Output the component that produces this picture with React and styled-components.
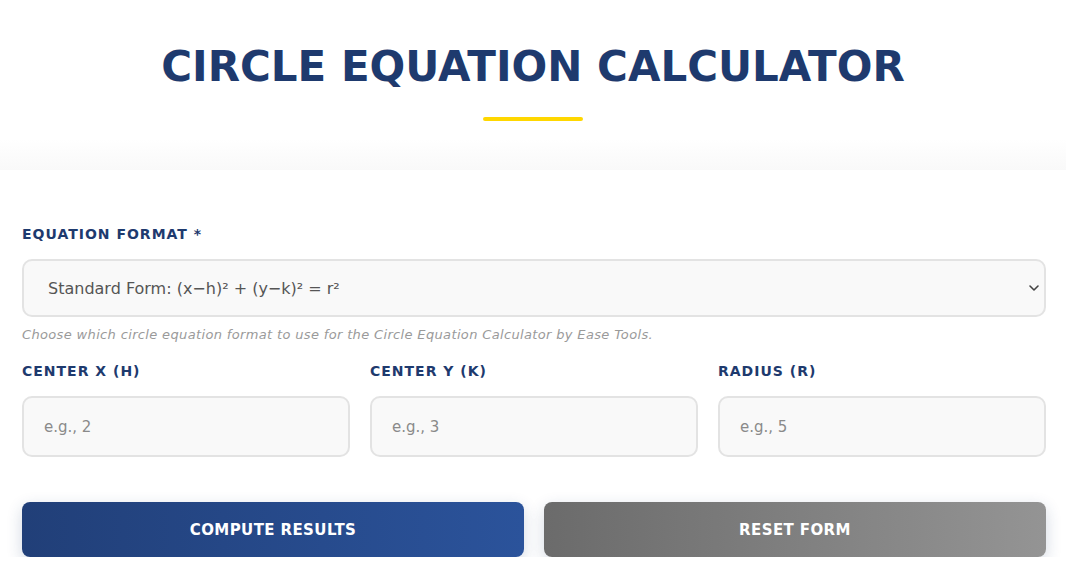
import React from "react";
import styled, { createGlobalStyle } from "styled-components";

const GlobalStyle = createGlobalStyle`
  * { box-sizing: border-box; }
  body {
    margin: 0;
    background: #ffffff;
    font-family: "DejaVu Sans", "Noto Sans", sans-serif;
  }
`;

const Header = styled.header`
  height: 170px;
  padding-top: 42px;
  display: flex;
  flex-direction: column;
  align-items: center;
  background: linear-gradient(180deg, #ffffff 0%, #ffffff 82%, #f9f9f9 100%);
`;

const Title = styled.h1`
  margin: 0;
  font-family: "DejaVu Sans", sans-serif;
  font-size: 42px;
  font-weight: 700;
  letter-spacing: 0;
  line-height: 50px;
  color: #1e3a6e;
`;

const Underline = styled.div`
  width: 100px;
  height: 4px;
  margin-top: 25px;
  border-radius: 2px;
  background: #ffd700;
`;

const Form = styled.form`
  padding: 56px 20px 0 22px;
  display: flex;
  flex-direction: column;
`;

const Label = styled.label`
  display: block;
  font-family: "DejaVu Sans", sans-serif;
  font-size: 14px;
  line-height: 17px;
  font-weight: 700;
  letter-spacing: 1px;
  color: #1e3a6e;
  margin-bottom: 16px;
`;

const SelectWrap = styled.div`
  position: relative;
`;

const Select = styled.select`
  width: 100%;
  height: 58px;
  padding: 0 40px 0 24px;
  border: 2px solid #e3e3e3;
  border-radius: 10px;
  background: #f9f9f9;
  font-family: "DejaVu Sans", sans-serif;
  font-size: 16px;
  color: #555;
  appearance: none;
`;

const Chevron = styled.svg`
  position: absolute;
  right: 6px;
  top: 23px;
  width: 12px;
  height: 12px;
  pointer-events: none;
`;

const Help = styled.p`
  margin: 10px 0 0;
  font-family: "DejaVu Sans", sans-serif;
  font-size: 13px;
  line-height: 16px;
  letter-spacing: 0.35px;
  font-style: italic;
  color: #9a9a9a;
`;

const Fields = styled.div`
  display: grid;
  grid-template-columns: repeat(3, 1fr);
  gap: 20px;
  margin-top: 20px;
`;

const Input = styled.input`
  width: 100%;
  height: 61px;
  padding: 0 20px;
  border: 2px solid #e3e3e3;
  border-radius: 10px;
  background: #f9f9f9;
  font-family: "DejaVu Sans", sans-serif;
  font-size: 15px;
  color: #333;
  outline: none;
  &::placeholder { color: #8a8a8a; }
`;

const Buttons = styled.div`
  display: grid;
  grid-template-columns: 1fr 1fr;
  gap: 20px;
  margin-top: 45px;
`;

const Button = styled.button`
  height: 55px;
  border: none;
  border-radius: 8px;
  font-family: "DejaVu Sans", sans-serif;
  font-size: 15px;
  font-weight: 700;
  letter-spacing: 0.4px;
  color: #ffffff;
  background: ${(p) =>
    p.$variant === "reset"
      ? "linear-gradient(90deg, #6b6b6b 0%, #949494 100%)"
      : "linear-gradient(90deg, #213f78 0%, #2b539b 100%)"};
  box-shadow: 0 5px 16px rgba(30, 58, 110, 0.2);
`;

export default function App() {
  return (
    <>
      <GlobalStyle />
      <Header>
        <Title>CIRCLE EQUATION CALCULATOR</Title>
        <Underline />
      </Header>
      <Form onSubmit={(e) => e.preventDefault()}>
        <Label>EQUATION FORMAT *</Label>
        <SelectWrap>
          <Select defaultValue="standard">
            <option value="standard">Standard Form: (x−h)² + (y−k)² = r²</option>
            <option value="general">General Form: x² + y² + Dx + Ey + F = 0</option>
          </Select>
          <Chevron viewBox="0 0 12 12">
            <path d="M2 4l4 4 4-4" fill="none" stroke="#444" strokeWidth="1.6" strokeLinecap="round" strokeLinejoin="round" />
          </Chevron>
        </SelectWrap>
        <Help>Choose which circle equation format to use for the Circle Equation Calculator by Ease Tools.</Help>
        <Fields>
          <div>
            <Label>CENTER X (H)</Label>
            <Input placeholder="e.g., 2" />
          </div>
          <div>
            <Label>CENTER Y (K)</Label>
            <Input placeholder="e.g., 3" />
          </div>
          <div>
            <Label>RADIUS (R)</Label>
            <Input placeholder="e.g., 5" />
          </div>
        </Fields>
        <Buttons>
          <Button type="submit">COMPUTE RESULTS</Button>
          <Button type="button" $variant="reset">RESET FORM</Button>
        </Buttons>
      </Form>
    </>
  );
}
